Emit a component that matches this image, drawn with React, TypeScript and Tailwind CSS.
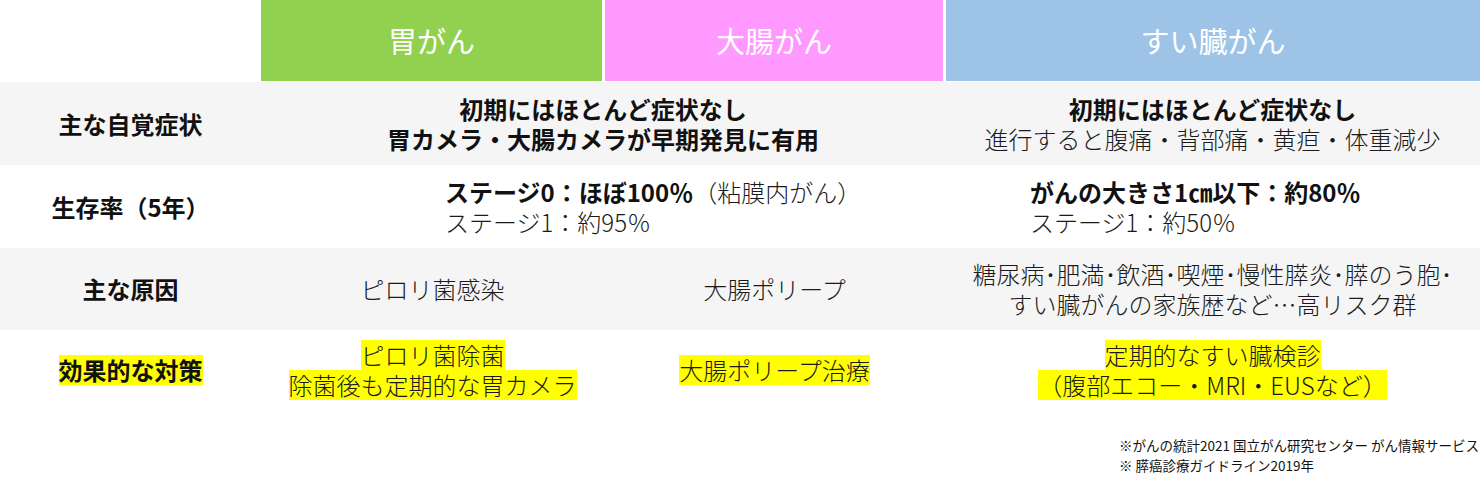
import React from "react";

const FONT = '"Noto Sans CJK JP", "Noto Sans", sans-serif';
const COLS = "grid grid-cols-[261px_343px_341px_1fr]";

function Label({ children }: { children: React.ReactNode }) {
  return (
    <div className="flex items-center justify-center text-[24px] font-bold text-[#111]">
      {children}
    </div>
  );
}

function HL({ children }: { children: React.ReactNode }) {
  return <span className="inline-block bg-[#ffff00] leading-[30px]">{children}</span>;
}

export default function App() {
  return (
    <div className="w-[1480px] bg-white font-light text-[#1a1a1a]" style={{ fontFamily: FONT }}>
      {/* header */}
      <div className={`${COLS} h-[81px] mb-[1px]`}>
        <div />
        <div className="mr-[2px] flex items-center justify-center bg-[#92d050] text-[29px] font-normal text-white">
          胃がん
        </div>
        <div className="ml-[1px] mr-[2px] flex items-center justify-center bg-[#ff99ff] text-[29px] font-normal text-white">
          大腸がん
        </div>
        <div className="ml-[1px] flex items-center justify-center bg-[#9dc3e6] text-[29px] font-normal text-white">
          すい臓がん
        </div>
      </div>

      {/* row 1 */}
      <div className={`${COLS} h-[83px] bg-[#f5f5f5]`}>
        <Label>主な自覚症状</Label>
        <div className="col-span-2 flex flex-col items-center justify-center text-[24px] font-bold leading-[30px] text-[#111]">
          <div>初期にはほとんど症状なし</div>
          <div>胃カメラ・大腸カメラが早期発見に有用</div>
        </div>
        <div className="flex flex-col items-center justify-center text-[24px] leading-[30px]">
          <div className="font-bold text-[#111]">初期にはほとんど症状なし</div>
          <div>進行すると腹痛・背部痛・黄疸・体重減少</div>
        </div>
      </div>

      {/* row 2 */}
      <div className={`${COLS} h-[83px] bg-white`}>
        <Label>生存率（5年）</Label>
        <div className="col-span-2 flex flex-col justify-center pl-[184px] text-[24px] leading-[30px]">
          <div>
            <span className="font-bold text-[#111]">ステージ0：ほぼ100％</span>（粘膜内がん）
          </div>
          <div>ステージ1：約95％</div>
        </div>
        <div className="flex flex-col justify-center pl-[85px] text-[24px] leading-[30px]">
          <div className="font-bold text-[#111]">がんの大きさ1㎝以下：約80％</div>
          <div>ステージ1：約50％</div>
        </div>
      </div>

      {/* row 3 */}
      <div className={`${COLS} h-[82px] bg-[#f5f5f5]`}>
        <Label>主な原因</Label>
        <div className="flex items-center justify-center text-[24px]">ピロリ菌感染</div>
        <div className="flex items-center justify-center text-[24px]">大腸ポリープ</div>
        <div className="flex flex-col items-center justify-center text-[24px] leading-[30px]">
          <div>糖尿病･肥満･飲酒･喫煙･慢性膵炎･膵のう胞･</div>
          <div>すい臓がんの家族歴など…高リスク群</div>
        </div>
      </div>

      {/* row 4 */}
      <div className={`${COLS} h-[80px] bg-white`}>
        <div className="flex items-center justify-center text-[24px] font-bold text-[#111]">
          <HL>効果的な対策</HL>
        </div>
        <div className="flex flex-col items-center justify-center text-[24px]">
          <HL>ピロリ菌除菌</HL>
          <HL>除菌後も定期的な胃カメラ</HL>
        </div>
        <div className="flex flex-col items-center justify-center text-[24px]">
          <HL>大腸ポリープ治療</HL>
        </div>
        <div className="flex flex-col items-center justify-center text-[24px]">
          <HL>定期的なすい臓検診</HL>
          <HL>（腹部エコー・MRI・EUSなど）</HL>
        </div>
      </div>

      {/* footnotes */}
      <div className="mt-[25px] flex justify-end pr-[1px]">
        <div className="text-[13.5px] font-normal leading-[20px] text-[#111]">
          <div>※がんの統計2021 国立がん研究センター がん情報サービス</div>
          <div>※ 膵癌診療ガイドライン2019年</div>
        </div>
      </div>
    </div>
  );
}
